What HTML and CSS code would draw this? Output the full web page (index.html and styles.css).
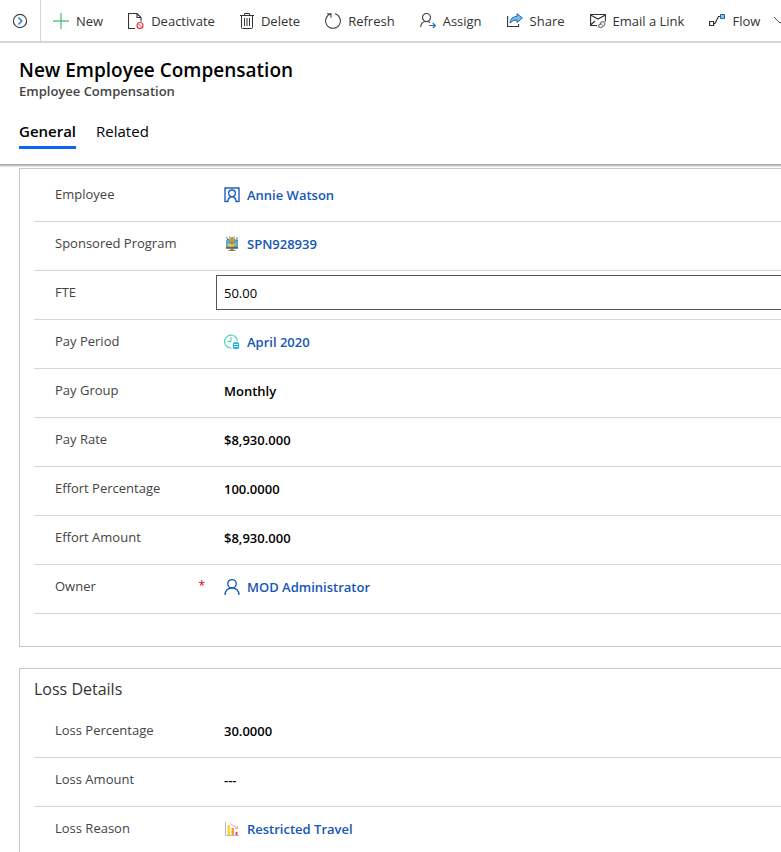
FILE: index.html
```html
<!DOCTYPE html>
<html lang="en">
<head>
<meta charset="utf-8">
<title>New Employee Compensation</title>
<link rel="stylesheet" href="styles.css">
</head>
<body>
<nav class="bar" aria-label="Commands">
  <button class="expand" type="button" aria-label="Expand">
    <svg width="16" height="16" viewBox="0 0 16 16" fill="none"><circle cx="8" cy="8" r="6.6" stroke="#444" stroke-width="1.2"/><path d="M6.500 4.500 9.800 8l-3.300 3.500" stroke="#2b7bd0" stroke-width="1.500"/></svg>
  </button>
  <div class="commands">
    <button class="command" type="button"><svg width="16" height="16" viewBox="0 0 16 16"><path d="M8 0v16M0 8h16" stroke="#64c387" stroke-width="1.400"/></svg>New</button>
    <button class="command" type="button"><svg width="16" height="16" viewBox="0 0 16 16" fill="none"><path d="M7 15.500H.5V.5H9l4 4v4M9 .5v4h4" stroke="#333" stroke-width="1.100"/><circle cx="12" cy="12.500" r="3" stroke="#e8323c" stroke-width="1.100"/><path d="m10 10.500 4 4" stroke="#e8323c"/></svg>Deactivate</button>
    <button class="command" type="button"><svg width="14" height="16" viewBox="0 0 14 16" fill="none"><path d="M0 2.500h14M4.500 2.500v-2h5v2M1.500 2.500v12q0 1 1 1h9q1 0 1-1v-12M4.500 5v8M7 5v8M9.500 5v8" stroke="#333"/></svg>Delete</button>
    <button class="command" type="button"><svg width="16" height="16" viewBox="0 0 16 16" fill="none"><path d="M2 .7h4v4M6 .8A7.400 7.400 0 1 0 10 .8" stroke="#444" stroke-width="1.100"/></svg>Refresh</button>
    <button class="command" type="button"><svg width="16" height="16" viewBox="0 0 16 16" fill="none"><circle cx="6.500" cy="4.500" r="4" stroke="#444" stroke-width="1.200"/><path d="M.6 14q.4-5.500 5.900-5.500 2 0 3.500 1" stroke="#444" stroke-width="1.200"/><path d="M9 12.500h6M12.800 10l2.500 2.500-2.500 2.500" stroke="#1e74c8" stroke-width="1.200"/></svg>Assign</button>
    <button class="command" type="button"><svg width="16" height="16" viewBox="0 0 16 16" fill="none"><path d="M.6 3v10.500h11V11" stroke="#333" stroke-width="1.100"/><path d="M3 10q.5-6.500 7-6.500V.7L15.400 5 10 9.500V7q-4-.5-7 3Z" fill="#79bdf0" stroke="#1b65a8"/></svg>Share</button>
    <button class="command" type="button"><svg width="16" height="16" viewBox="0 0 16 16" fill="none"><path d="M7 12.500H.6v-11h14.800v7M.6 2l7.400 4 7.400-4M.6 12 5 8" stroke="#333" stroke-width="1.100"/><path d="M10 10.500 11.500 9q2-1 3 .5t-.5 3l-1 .8M12.500 11l-3 .5q-1.500 1-.5 2.500 1.500 1 3 0l1-1" stroke="#777" stroke-width="1.200"/></svg>Email a Link</button>
    <button class="command" type="button"><svg width="16" height="16" viewBox="0 0 16 16" fill="none"><path d="M4.500 10.500h1.500l3.500-7h2" stroke="#333" stroke-width="1.200"/><path d="M.6 8.500h4v4h-4z" stroke="#333" stroke-width="1.200"/><path d="M11.500 1.500h4v4h-4z" fill="#86c3f2" stroke="#1b65a8"/></svg>Flow<svg class="chevron" width="14" height="14" viewBox="0 0 14 14" fill="none"><path d="m1 3 6 6 6-6" stroke="#555"/></svg></button>
  </div>
</nav>
<header class="header">
  <h1>New Employee Compensation</h1>
  <p>Employee Compensation</p>
  <div class="tabs" role="tablist">
    <button class="tab active" type="button" role="tab" aria-selected="true">General</button>
    <button class="tab" type="button" role="tab" aria-selected="false">Related</button>
  </div>
</header>
<main class="form">
  <section class="card details">
    <div class="row"><span class="label">Employee</span><a class="value link" href="#"><svg width="16" height="16" viewBox="0 0 16 16" fill="none" stroke="#1f5fbf" stroke-width="1.400"><path d="M4.200 14.500H1V1h14v13.500h-3.200"/><circle cx="8" cy="6.300" r="3.300"/><path d="M3.800 15q.4-5.200 4.200-5.200t4.200 5.200"/></svg>Annie Watson</a></div>
    <div class="row"><span class="label">Sponsored Program</span><a class="value link" href="#"><svg width="16" height="16" viewBox="0 0 16 16"><path d="M2 4h12v8H2z" fill="#48b3df"/><path d="M2 11h12v1.800H2z" fill="#50647b"/><path d="M6.500 12.500h3V14h2v1h-7v-1h2z" fill="#8b765d"/><path d="M2 2h2M3 3.500h2M12 2h2M11 4h3M5 1h1M10 1h1" stroke="#58748c"/><circle cx="8" cy="4" r="2.600" fill="#f1c34f" stroke="#776744" stroke-width=".7"/><path d="M8 2.500v3" stroke="#675332"/><path d="m3 8 2-1 2 1h2l3-1.500 1 1L9 11H5l-2-1z" fill="#f5bd43" stroke="#a57732" stroke-width=".5"/></svg>SPN928939</a></div>
    <div class="row"><label class="label" for="fte">FTE</label><input class="field" id="fte" type="text" value="50.00"></div>
    <div class="row"><span class="label">Pay Period</span><a class="value link" href="#"><svg width="16" height="16" viewBox="0 0 16 16" fill="none"><path d="M7.500 14A6.500 6.500 0 1 1 13.500 7" stroke="#4bd5bd" stroke-width="1.200"/><path d="M7 3v4.500H3.500M7 .8v1" stroke="#3dceb8"/><path d="M9 9q3-2 6 0v5.500q-3 1.500-6 0z" fill="#22b5e6"/><path d="M10 10.500h4M10 12.500h4" stroke="#c8f2fb"/></svg>April 2020</a></div>
    <div class="row"><span class="label">Pay Group</span><span class="value">Monthly</span></div>
    <div class="row"><span class="label">Pay Rate</span><span class="value">$8,930.000</span></div>
    <div class="row"><span class="label">Effort Percentage</span><span class="value">100.0000</span></div>
    <div class="row"><span class="label">Effort Amount</span><span class="value">$8,930.000</span></div>
    <div class="row"><span class="label">Owner<span class="required">*</span></span><a class="value link" href="#"><svg width="16" height="16" viewBox="0 0 16 16" fill="none" stroke="#1f5fbf" stroke-width="1.400"><circle cx="8" cy="4.800" r="4.200"/><path d="M1 16q.5-7 7-7t7 7"/></svg>MOD Administrator</a></div>
  </section>
  <section class="card">
    <h2>Loss Details</h2>
    <div class="row"><span class="label">Loss Percentage</span><span class="value">30.0000</span></div>
    <div class="row"><span class="label">Loss Amount</span><span class="value">---</span></div>
    <div class="row"><span class="label">Loss Reason</span><a class="value link" href="#"><svg width="16" height="16" viewBox="0 0 16 16" fill="none"><path d="M1.500 1v13.500H15" stroke="#a9b9de"/><path d="M3.500 4h2.500v10H3.500z" fill="#ffd31c"/><path d="M7.500 7H10v7H7.500z" fill="#ff9d28"/><path d="M11.500 11H13.500v3h-2z" fill="#f04352"/><path d="m6 2.500 7.500 5M11 7.500h2.500V5" stroke="#f3a9ae"/></svg>Restricted Travel</a></div>
  </section>
</main>
</body>
</html>
```
FILE: styles.css
```css
* { box-sizing: border-box; }
body {
  margin: 0;
  overflow: hidden;
  background: #fff;
  color: #333;
  font: 13px/20px "Open Sans", "Noto Sans", sans-serif;
}
button {
  padding: 0;
  border: 0;
  background: none;
  color: inherit;
  font: inherit;
}
svg { flex: none; }
.bar {
  display: flex;
  height: 43px;
  border-bottom: 2px solid #d6d6d6;
  overflow: hidden;
}
.expand {
  display: flex;
  flex: none;
  align-items: center;
  justify-content: center;
  width: 41px;
  border-right: 1px solid #d6d6d6;
}
.commands {
  display: flex;
  flex: none;
  gap: 25px;
  padding-left: 12px;
}
.command {
  display: flex;
  align-items: center;
  gap: 7px;
  white-space: nowrap;
}
.chevron { margin-left: 6px; }
.header {
  padding: 16px 19px 0;
  border-bottom: 1px solid #a8a8a8;
  box-shadow: 0 1px 0 #c4c4c4, 0 2px 0 #e2e2e2;
}
h1 {
  margin: 0;
  color: #000;
  font-size: 19px;
  font-weight: 600;
  line-height: 22px;
}
.header p {
  margin: 0;
  color: #444;
  font-weight: 600;
}
.tabs {
  display: flex;
  gap: 20px;
  margin-top: 20px;
  padding-bottom: 15px;
}
.tab {
  height: 28px;
  padding-bottom: 5px;
  border-bottom: 3px solid transparent;
  color: #000;
  font-size: 15px;
}
.tab.active {
  border-color: #0a66f5;
  font-weight: 600;
}
.form {
  display: grid;
  gap: 21px;
  padding: 3px 0 0 19px;
}
.card {
  padding-left: 14px;
  border: 1px solid #c8c8c8;
  border-right: 0;
}
.details { padding-top: 4px; padding-bottom: 32px; }
h2 {
  margin: 0;
  font-size: 16px;
  font-weight: 400;
  line-height: 40px;
}
.row {
  display: grid;
  grid-template-columns: 161px 1fr;
  align-items: center;
  height: 49px;
  padding-left: 21px;
  border-bottom: 1px solid #d6d6d6;
}
.label {
  display: flex;
  justify-content: space-between;
  padding: 0 11px 6px 0;
  color: #444;
}
.required { color: #e00000; font-size: 12px; }
.value {
  display: flex;
  align-items: center;
  gap: 7px;
  padding: 0 0 4px 8px;
  color: #000;
  font-weight: 600;
}
.link {
  color: #1556b8;
  text-decoration: none;
}
.field {
  align-self: start;
  width: 100%;
  height: 35px;
  margin-top: 4px;
  padding: 0 7px;
  border: 1px solid #555;
  border-right: 0;
  color: #000;
  font: inherit;
}
```
